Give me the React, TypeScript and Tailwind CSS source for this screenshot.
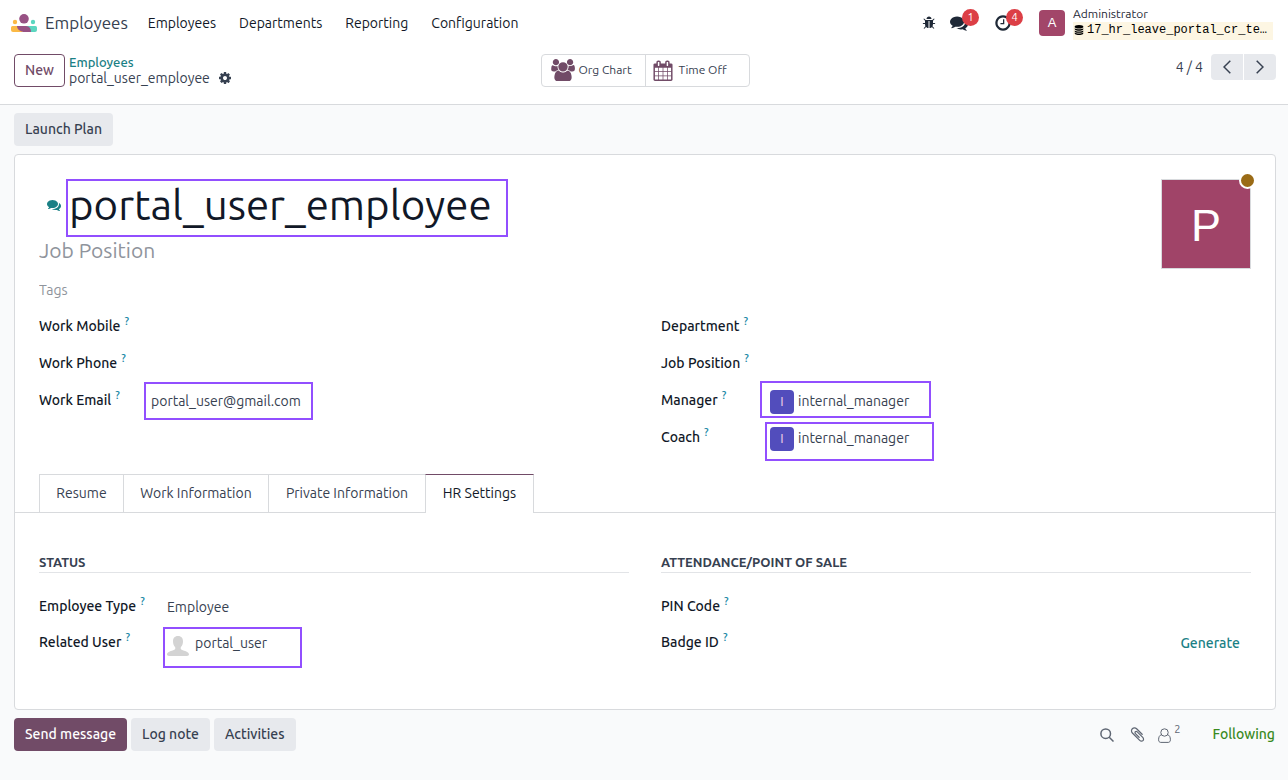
import type { ReactNode } from "react";

const PATHS = {
  bug: "M1696 960q0 26-19 45t-45 19h-224q0 171-67 290l208 209q19 19 19 45t-19 45q-18 19-45 19t-45-19l-198-197q-5 5-15 13t-42 28.5-65 36.5-82 29-97 13v-896h-128v896q-51 0-101.5-13.5t-87-33-66-39-43.5-32.5l-15-14-183 207q-20 21-48 21-24 0-43-16-19-18-20.5-44.5t15.5-46.5l202-227q-58-114-58-274h-224q-26 0-45-19t-19-45 19-45 45-19h224v-294l-173-173q-19-19-19-45t19-45 45-19 45 19l173 173h844l173-173q19-19 45-19t45 19 19 45-19 45l-173 173v294h224q26 0 45 19t19 45zm-480-576h-640q0-133 93.5-226.5t226.5-93.5 226.5 93.5 93.5 226.5z",
  comments:
    "M1408 768q0 139-94 257t-256.5 186.5-353.5 68.5q-86 0-176-16-124 88-278 128-36 9-86 16h-3q-11 0-20.5-8t-11.5-21q-1-3-1-6.5t.5-6.5 2-6l2.5-5 3.5-5.5 4-5 4.5-5 4-4.5q5-6 23-25t26-29.5 22.5-29 25-38.5 20.5-44q-124-72-195-177t-71-224q0-139 94-257t256.5-186.5 353.5-68.5 353.5 68.5 256.5 186.5 94 257zm384 256q0 120-71 224.5t-195 176.5q10 24 20.5 44t25 38.5 22.5 29 26 29.5 23 25q1 1 4 4.5t4.5 5 4 5 3.5 5.5l2.5 5 2 6 .5 6.5-1 6.5q-3 14-13 22t-22 7q-50-7-86-16-154-40-278-128-90 16-176 16-271 0-472-132 58 4 88 4 161 0 309-45t264-129q125-92 192-212t67-254q0-77-23-152 129 71 204 178t75 230z",
  clock:
    "M1024 544v448q0 14-9 23t-23 9h-320q-14 0-23-9t-9-23v-64q0-14 9-23t23-9h224v-352q0-14 9-23t23-9h64q14 0 23 9t9 23zm416 352q0-148-73-273t-198-198-273-73-273 73-198 198-73 273 73 273 198 198 273 73 273-73 198-198 73-273zm224 0q0 209-103 385.5t-279.5 279.5-385.5 103-385.5-103-279.5-279.5-103-385.5 103-385.5 279.5-279.5 385.5-103 385.5 103 279.5 279.5 103 385.5z",
  cog: "M1152 896q0-106-75-181t-181-75-181 75-75 181 75 181 181 75 181-75 75-181zm512-109v222q0 12-8 23t-20 13l-185 28q-19 54-39 91 35 50 107 138 10 12 10 25t-9 23q-27 37-99 108t-94 71q-12 0-26-9l-138-108q-44 23-91 38-16 136-29 186-7 28-36 28h-222q-14 0-24.5-8.5t-11.5-21.5l-28-184q-49-16-90-37l-141 107q-10 9-25 9-14 0-25-11-126-114-165-168-7-10-7-23 0-12 8-23 15-21 51-66.5t54-70.5q-27-50-41-99l-183-27q-13-2-21-12.5t-8-23.5v-222q0-12 8-23t19-13l186-28q14-46 39-92-40-57-107-138-10-12-10-24 0-10 9-23 26-36 98.5-107.5t94.5-71.5q13 0 26 10l138 107q44-23 91-38 16-136 29-186 7-28 36-28h222q14 0 24.5 8.5t11.5 21.5l28 184q49 16 90 37l142-107q9-9 24-9 13 0 25 10 129 119 165 170 7 8 7 22 0 12-8 23-15 21-51 66.5t-54 70.5q26 50 41 98l183 28q13 2 21 12.5t8 23.5z",
  database:
    "M896 768q237 0 443-43t325-127v170q0 69-103 128t-280 93.5-385 34.5-385-34.5-280-93.5-103-128v-170q119 84 325 127t443 43zm0 768q237 0 443-43t325-127v170q0 69-103 128t-280 93.5-385 34.5-385-34.5-280-93.5-103-128v-170q119 84 325 127t443 43zm0-384q237 0 443-43t325-127v170q0 69-103 128t-280 93.5-385 34.5-385-34.5-280-93.5-103-128v-170q119 84 325 127t443 43zm0-1152q208 0 385 34.5t280 93.5 103 128v128q0 69-103 128t-280 93.5-385 34.5-385-34.5-280-93.5-103-128v-128q0-69 103-128t280-93.5 385-34.5z",
  users:
    "M657 896q-162 5-265 128h-134q-82 0-138-40.5t-56-118.5q0-353 124-353 6 0 43.5 21t97.5 42.5 119 21.5q67 0 133-23-5 37-5 66 0 159 93 287zm1071 637q0 120-73 189.5t-194 69.5h-874q-121 0-194-69.5t-73-189.5q0-53 3.5-103.5t14-109 26.5-108.5 43-97.5 62-81 85.5-53.5 111.5-20q10 0 43 21.5t73 48 107 48 135 21.5 135-21.5 107-48 73-48 43-21.5q61 0 111.5 20t85.5 53.5 62 81 43 97.5 26.5 108.5 14 109 3.5 103.5zm-1024-1277q0 106-75 181t-181 75-181-75-75-181 75-181 181-75 181 75 75 181zm704 384q0 159-112.5 271.5t-271.5 112.5-271.5-112.5-112.5-271.5 112.5-271.5 271.5-112.5 271.5 112.5 112.5 271.5zm576 225q0 78-56 118.5t-138 40.5h-134q-103-123-265-128 93-128 93-287 0-29-5-66 66 23 133 23 59 0 119-21.5t97.5-42.5 43.5-21q124 0 124 353zm-128-609q0 106-75 181t-181 75-181-75-75-181 75-181 181-75 181 75 75 181z",
  calendar:
    "M192 1664h288v-288h-288v288zm352 0h320v-288h-320v288zm-352-352h288v-320h-288v320zm352 0h320v-320h-320v320zm-352-384h288v-288h-288v288zm736 736h320v-288h-320v288zm-384-736h320v-288h-320v288zm768 736h288v-288h-288v288zm-384-352h320v-320h-320v320zm-352-864v-288q0-13-9.5-22.5t-22.5-9.5h-64q-13 0-22.5 9.5t-9.5 22.5v288q0 13 9.5 22.5t22.5 9.5h64q13 0 22.5-9.5t9.5-22.5zm736 864h288v-320h-288v320zm-384-384h320v-288h-320v288zm384 0h288v-288h-288v288zm32-480v-288q0-13-9.5-22.5t-22.5-9.5h-64q-13 0-22.5 9.5t-9.5 22.5v288q0 13 9.5 22.5t22.5 9.5h64q13 0 22.5-9.5t9.5-22.5zm384-64v1280q0 52-38 90t-90 38h-1408q-52 0-90-38t-38-90v-1280q0-52 38-90t90-38h128v-96q0-66 47-113t113-47h64q66 0 113 47t47 113v96h384v-96q0-66 47-113t113-47h64q66 0 113 47t47 113v96h128q52 0 90 38t38 90z",
  clip: "M1596 1385q0 117-79 196t-196 79q-135 0-235-100l-777-776q-113-115-113-271 0-159 110-270t269-111q158 0 273 113l605 606q10 10 10 22 0 16-30.5 46.5t-46.5 30.5q-13 0-23-10l-606-607q-79-77-181-77-106 0-179 75t-73 181q0 105 76 181l776 777q63 63 145 63 64 0 106-42t42-106q0-82-63-145l-581-581q-26-24-60-24-29 0-48 19t-19 48q0 32 25 59l410 410q10 10 10 22 0 16-31 47t-47 31q-12 0-22-10l-410-410q-63-61-63-149 0-82 57-139t139-57q88 0 149 63l581 581q100 98 100 235z",
};

function Icon({ name, className, box = "0 0 1792 1792" }: { name: keyof typeof PATHS; className: string; box?: string }) {
  return (
    <svg viewBox={box} className={`shrink-0 ${className}`} fill="currentColor" aria-hidden="true">
      <path d={PATHS[name]} />
    </svg>
  );
}

function Logo() {
  return (
    <svg viewBox="0 0 26 18" className="h-[18px] w-[26px] shrink-0" aria-hidden="true">
      <circle cx="13" cy="4.800" r="4.800" fill="#985184" />
      <circle cx="4" cy="8" r="2.200" fill="#fbb945" />
      <circle cx="22" cy="8" r="2.200" fill="#5cd6c0" />
      <path d="M0 13.500A1.500 1.500 0 0 1 1.500 12H7c0 3 4 6 8 6H2a2 2 0 0 1-2-2z" fill="#fbb945" />
      <path d="M26 13.500a1.500 1.500 0 0 0-1.500-1.500H15v6h9a2 2 0 0 0 2-2z" fill="#5cd6c0" />
      <path d="M6 12h9c3.500 0 5 3 5 6h-6c-4.500 0-8-2.500-8-6z" fill="#985184" />
    </svg>
  );
}

function Highlight({ className }: { className: string }) {
  return <span aria-hidden="true" className={`pointer-events-none absolute border-2 border-[#924fff] ${className}`} />;
}

function Label({ id, children, className = "" }: { id: string; children: ReactNode; className?: string }) {
  return (
    <label htmlFor={id} className={`flex shrink-0 items-start font-[560] whitespace-nowrap text-[#111827] ${className}`}>
      {children}
      <span className="ml-1 text-[11px] leading-[10px] font-medium text-[#1787a5]">?</span>
    </label>
  );
}

function InitialAvatar() {
  return (
    <span className="mr-1 flex size-6 shrink-0 items-center justify-center rounded bg-[#524dbc] font-['Liberation_Sans',sans-serif] text-[12px] text-[#e9c8e4]">
      I
    </span>
  );
}

const field = "min-w-0 flex-1 bg-transparent text-[#374151] outline-none";
const secondary = "h-[33px] rounded bg-[#e7e9ed] px-[11px] pb-[2px] font-[560] text-[#374151]";
const tab = "h-[38px] border-t border-l border-[#d8dadd] pb-[2px]";
const badge = "absolute -top-[5px] left-3 h-[17px] min-w-[17px] rounded-full bg-[#dc3f46] px-[5px] text-center text-[11px] leading-4 text-white";

export default function App() {
  return (
    <div className="min-h-screen bg-[#f9fafb] font-['Ubuntu','Noto_Sans',sans-serif] text-[14px] leading-5 text-[#374151]">
      <header className="flex h-[46px] items-center bg-white pr-[15px] pl-[11px]">
        <a href="#home" className="flex items-center gap-2 text-[17px] text-[#374151]">
          <Logo />
          Employees
        </a>
        <nav className="ml-5 flex gap-[23px] text-[#111827]">
          <a href="#employees">Employees</a>
          <a href="#departments">Departments</a>
          <a href="#reporting">Reporting</a>
          <a href="#configuration">Configuration</a>
        </nav>
        <div className="ml-auto flex items-center text-[#1f2937]">
          <button aria-label="Open developer tools">
            <Icon name="bug" className="size-[14px]" />
          </button>
          <button aria-label="Messages" className="relative ml-[14px]">
            <Icon name="comments" className="size-[18px]" />
            <span className={badge}>1</span>
          </button>
          <button aria-label="Activities" className="relative ml-[26px]">
            <Icon name="clock" className="size-[18px]" />
            <span className={badge}>4</span>
          </button>
          <button className="ml-[27px] flex items-center gap-2 text-left">
            <span className="flex size-[26px] items-center justify-center rounded bg-[#a24669] font-['Liberation_Sans',sans-serif] text-[13px] text-white">
              A
            </span>
            <span className="flex flex-col text-[12px]">
              <span className="h-4 leading-[15px]">Administrator</span>
              <span className="flex h-[18px] w-[200px] items-center gap-[3px] bg-[#fdf6e3] px-px pb-[2px] font-['Liberation_Mono',monospace] text-[12px] text-black">
                <Icon name="database" className="size-[10px]" />
                17_hr_leave_portal_cr_te…
              </span>
            </span>
          </button>
        </div>
      </header>

      <div className="grid h-[59px] grid-cols-[1fr_auto_1fr] items-start border-b border-[#d8dadd] bg-white pt-2 pr-3 pl-[14px]">
        <div className="flex items-start gap-1">
          <button className="h-[33px] rounded border border-[#714b67] px-[10px] pb-[2px] font-[560] text-[#714b67]">New</button>
          <div className="flex flex-col">
            <a href="#list" className="text-[13px] leading-4 font-[560] text-[#1a8085]">
              Employees
            </a>
            <span className="flex items-center gap-2 leading-4">
              portal_user_employee
              <button aria-label="Actions">
                <Icon name="cog" className="size-[14px]" />
              </button>
            </span>
          </div>
        </div>
        <div className="flex h-[33px] divide-x divide-[#d8dadd] rounded border border-[#d8dadd] text-[12px]">
          <button className="flex w-[104px] items-center gap-1 pb-px pl-[9px]">
            <Icon name="users" box="64 0 1920 1792" className="h-[22px] w-6 text-[#714b67]" />
            Org Chart
          </button>
          <button className="flex w-[103px] items-center gap-[6px] pb-px pl-[7px]">
            <Icon name="calendar" box="64 -128 1664 1920" className="h-[22px] w-5 text-[#714b67]" />
            Time Off
          </button>
        </div>
        <div className="flex items-center justify-end">
          <span className="mr-2">4 / 4</span>
          <button aria-label="Previous" className="mr-px flex h-[26px] w-8 items-center justify-center rounded-l bg-[#e7e9ed]">
            <svg viewBox="0 0 8 14" className="h-[14px] w-2" fill="none" stroke="currentColor" strokeWidth="1.500" aria-hidden="true">
              <path d="M7.300.7 1 7l6.300 6.300" />
            </svg>
          </button>
          <button aria-label="Next" className="flex h-[26px] w-8 items-center justify-center rounded-r bg-[#e7e9ed]">
            <svg viewBox="0 0 8 14" className="h-[14px] w-2" fill="none" stroke="currentColor" strokeWidth="1.500" aria-hidden="true">
              <path d="M.700.700 7 7 .700 13.300" />
            </svg>
          </button>
        </div>
      </div>

      <main className="px-[14px] pt-2">
        <button className={secondary}>Launch Plan</button>

        <section className="mt-2 mr-[-2px] rounded border border-[#d8dadd] bg-white pb-[57px]">
          <div className="flex items-start justify-between px-6 pt-6">
            <div className="flex flex-1 flex-col">
              <div className="flex h-[58px] items-start">
                <button aria-label="Chat" className="mt-[19px] ml-2 text-[#1a8085]">
                  <Icon name="comments" className="size-[14px]" />
                </button>
                <div className="relative ml-2 flex h-full w-[540px] items-start">
                  <input aria-label="Employee name" defaultValue="portal_user_employee" className="h-[51px] w-full bg-transparent text-[42px] text-[#111827] outline-none" />
                  <Highlight className="top-0 bottom-0 -left-[3px] w-[442px]" />
                </div>
              </div>
              <input aria-label="Job title" placeholder="Job Position" className="h-[26px] bg-transparent text-[21px] outline-none placeholder:text-[#8f949c]" />
              <input aria-label="Tags" placeholder="Tags" className="mt-[17px] h-5 bg-transparent outline-none placeholder:text-[#8f949c]" />
            </div>
            <div className="relative flex size-[90px] items-center justify-center border border-[#d8dadd] bg-[#a04468] pt-1 font-['Liberation_Sans',sans-serif] text-[45px] text-white">
              P
              <span className="absolute -top-[8px] -right-[6px] size-[17px] rounded-full border-2 border-white bg-[#9a6b16]" />
            </div>
          </div>

          <div className="grid grid-cols-2 gap-8 px-6 pt-4">
            <div className="flex flex-col gap-[17px]">
              <div className="flex">
                <Label id="mobile" className="w-[112px]">Work Mobile</Label>
                <input id="mobile" className={field} />
              </div>
              <div className="flex">
                <Label id="phone" className="w-[112px]">Work Phone</Label>
                <input id="phone" className={field} />
              </div>
              <div className="flex">
                <Label id="email" className="w-[112px]">Work Email</Label>
                <div className="relative flex h-[22px] flex-1 items-center">
                  <input id="email" type="email" defaultValue="portal_user@gmail.com" className={field} />
                  <Highlight className="-top-2 -left-[7px] h-[38px] w-[169px]" />
                </div>
              </div>
            </div>
            <div className="flex flex-col gap-[17px]">
              <div className="flex">
                <Label id="department" className="w-[109px]">Department</Label>
                <input id="department" className={field} />
              </div>
              <div className="flex">
                <Label id="job" className="w-[109px]">Job Position</Label>
                <input id="job" className={field} />
              </div>
              <div className="flex h-5">
                <Label id="manager" className="w-[109px]">Manager</Label>
                <div className="relative flex h-6 flex-1 items-center">
                  <InitialAvatar />
                  <input id="manager" defaultValue="internal_manager" className={`pb-[2px] ${field}`} />
                  <Highlight className="-top-[9px] -left-[10px] h-[37px] w-[171px]" />
                </div>
              </div>
              <div className="flex h-5">
                <Label id="coach" className="w-[109px]">Coach</Label>
                <div className="relative flex h-6 flex-1 items-center">
                  <InitialAvatar />
                  <input id="coach" defaultValue="internal_manager" className={`pb-[2px] ${field}`} />
                  <Highlight className="-top-[5px] -left-[5px] h-[39px] w-[169px]" />
                </div>
              </div>
            </div>
          </div>

          <div role="tablist" className="mt-[27px] flex border-b border-[#d8dadd] pl-6">
            <button role="tab" className={`w-[84px] ${tab}`}>Resume</button>
            <button role="tab" className={`w-[145px] ${tab}`}>Work Information</button>
            <button role="tab" className={`w-[157px] ${tab}`}>Private Information</button>
            <button role="tab" aria-selected="true" className="-mb-px h-[39px] w-[109px] border-x border-t border-x-[#d8dadd] border-t-[#714b67] bg-white pb-[3px] text-[#111827]">
              HR Settings
            </button>
          </div>

          <div className="grid grid-cols-2 gap-8 px-6 pt-10">
            <div>
              <h2 className="border-b border-[#e2e4e7] text-[13px] leading-[19px] font-bold uppercase">Status</h2>
              <div className="mt-[23px] flex h-5">
                <Label id="type" className="w-[128px]">Employee Type</Label>
                <select id="type" className={`h-[22px] appearance-none ${field}`}>
                  <option>Employee</option>
                </select>
              </div>
              <div className="mt-4 flex h-5">
                <Label id="user" className="w-[128px]">Related User</Label>
                <div className="relative flex h-[22px] flex-1">
                  <svg viewBox="0 0 22 20" className="mt-1 mr-[6px] h-5 w-[22px] shrink-0" fill="#d3d3d3" aria-hidden="true">
                    <path d="M11 0c3.500 0 5 2.400 5 5.300 0 2.500-.8 4.700-2.200 6-.4 1.800.2 2.300 2 2.900 3.400 1 6.200 2.200 6.200 4.100 0 1.200-.8 1.700-2 1.700H2c-1.200 0-2-.5-2-1.700 0-1.900 2.800-3.100 6.200-4.100 1.800-.6 2.400-1.100 2-2.900C6.800 10 6 7.800 6 5.300 6 2.400 7.500 0 11 0z" />
                  </svg>
                  <input id="user" defaultValue="portal_user" className={field} />
                  <Highlight className="-top-[5px] -left-1 h-[41px] w-[139px]" />
                </div>
              </div>
            </div>
            <div>
              <h2 className="border-b border-[#e2e4e7] text-[13px] leading-[19px] font-bold uppercase">Attendance/Point of Sale</h2>
              <div className="mt-[23px] flex h-5">
                <Label id="pin" className="w-[128px]">PIN Code</Label>
                <input id="pin" className={field} />
              </div>
              <div className="mt-4 flex h-5">
                <Label id="badge" className="w-[128px]">Badge ID</Label>
                <input id="badge" className={field} />
                <button className="h-[22px] pr-[11px] font-[560] text-[#1a8085]">Generate</button>
              </div>
            </div>
          </div>
        </section>

        <div className="mt-2 mr-[-1px] flex items-center gap-1">
          <button className="h-[33px] rounded bg-[#714b67] px-[11px] pb-[2px] font-[560] text-white">Send message</button>
          <button className={secondary}>Log note</button>
          <button className={secondary}>Activities</button>
          <div className="ml-auto flex items-center text-[#5f6673]">
            <button aria-label="Search messages">
              <svg viewBox="0 0 14 14" className="size-[14px]" fill="none" stroke="currentColor" strokeWidth="1.500" aria-hidden="true">
                <circle cx="5.700" cy="5.700" r="4.800" />
                <path d="m9.200 9.200 4.300 4.300" />
              </svg>
            </button>
            <button aria-label="Attachments" className="ml-[15px]">
              <Icon name="clip" className="size-[17px]" />
            </button>
            <button aria-label="Followers" className="ml-3 flex items-start pb-1">
              <svg viewBox="0 0 13 15" className="mt-[5px] h-[15px] w-[13px]" fill="none" stroke="currentColor" aria-hidden="true">
                <circle cx="6.500" cy="4.500" r="3.700" />
                <path d="M3.500 6.700C1.500 7.200.6 9 .6 11.800c0 1.600.9 2.600 2.100 2.600h7.600c1.200 0 2.100-1 2.100-2.600 0-2.800-.9-4.600-2.900-5.100" />
              </svg>
              <span className="ml-[3px] text-[11px] leading-3">2</span>
            </button>
            <button className="ml-8 pb-px font-[560] text-[#3a8a1e]">Following</button>
          </div>
        </div>
      </main>
    </div>
  );
}
